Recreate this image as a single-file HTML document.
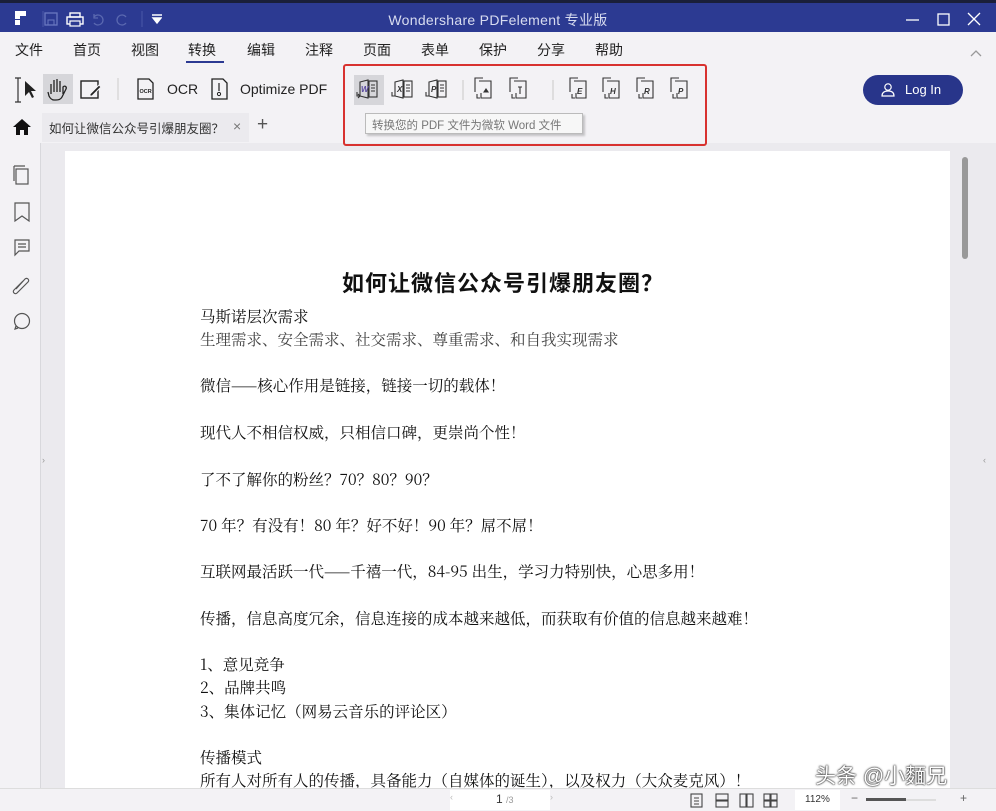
<!DOCTYPE html>
<html><head><meta charset="utf-8"><style>
*{margin:0;padding:0;box-sizing:border-box}
body{width:996px;height:811px;overflow:hidden;background:#f3f2f5;font-family:"Liberation Sans","Noto Sans CJK SC",sans-serif;position:relative;color:#222}
.abs{position:absolute}
#title{left:0;top:0;width:996px;height:32px;background:#2c3a92;border-top:3px solid #1a1f3a}
#title .t{left:0;width:996px;top:7px;text-align:center;color:#d8dcf0;font-size:14px;letter-spacing:.3px}
#menu{top:32px;left:0;width:996px;height:30px;background:#f3f2f5}
#menu span{position:absolute;top:8px;font-size:14px;color:#222}
#side{left:0;top:143px;width:41px;height:645px;border-right:1px solid #d8d8dc;background:#f3f2f5}
#gray{left:41px;top:143px;width:955px;height:645px;background:#ebeaee}
#page{left:65px;top:151px;width:885px;height:640px;background:#fff}
.p{position:absolute;left:135px;font-family:"Noto Serif CJK SC","Liberation Serif",serif;font-size:15.5px;letter-spacing:0;color:#111;white-space:nowrap;line-height:20px}
#status{left:0;top:788px;width:996px;height:23px;background:#f3f2f5;border-top:1px solid #ddd}
</style></head><body>
<div id="title" class="abs">
 <svg class="abs" style="left:12px;top:6px" width="150" height="20">
  <path d="M3 2h11v5H8v3H3z M3 11h5v5H3z" fill="#fff"/>
  <line x1="31" y1="2" x2="31" y2="18" stroke="#4a58a8"/>
  <rect x="33" y="4" width="12" height="12" fill="none" stroke="#6a78c0" stroke-width="1.3"/>
  <rect x="36" y="11" width="6" height="5" fill="none" stroke="#6a78c0"/>
  <rect x="55" y="8" width="16" height="7" fill="none" stroke="#fff" stroke-width="1.4"/><rect x="58" y="4" width="10" height="4" fill="none" stroke="#fff" stroke-width="1.4"/><rect x="58" y="12" width="10" height="5" fill="#2c3a92" stroke="#fff" stroke-width="1.2"/>
  <path d="M82 8a5 5 0 1 1 0 6M82 5v4h4" stroke="#5a68b0" fill="none" stroke-width="1.3"/>
  <path d="M114 8a5 5 0 1 0 0 6" stroke="#5a68b0" fill="none" stroke-width="1.3"/>
  <line x1="130" y1="2" x2="130" y2="18" stroke="#4a58a8"/>
  <path d="M140 6h10M141 9h8l-4 5z" stroke="#fff" fill="#fff" stroke-width="1.4"/>
 </svg>
 <div class="abs t">Wondershare PDFelement 专业版</div>
 <svg class="abs" style="left:900px;top:6px" width="90" height="20">
  <line x1="6" y1="11" x2="19" y2="11" stroke="#fff" stroke-width="1.3"/>
  <rect x="38" y="5" width="11" height="11" fill="none" stroke="#fff" stroke-width="1.3"/>
  <path d="M68 4l12 12M80 4L68 16" stroke="#fff" stroke-width="1.3"/>
 </svg>
</div>
<div id="menu" class="abs">
 <span style="left:15px">文件</span><span style="left:73px">首页</span><span style="left:131px">视图</span>
 <span style="left:188px">转换</span><span style="left:247px">编辑</span><span style="left:305px">注释</span>
 <span style="left:363px">页面</span><span style="left:421px">表单</span><span style="left:479px">保护</span>
 <span style="left:537px">分享</span><span style="left:595px">帮助</span>
 <div class="abs" style="left:186px;top:29px;width:38px;height:2px;background:#2c3a92"></div>
 <svg class="abs" style="left:969px;top:17px" width="14" height="10"><path d="M2 7l5-5 5 5" stroke="#999" fill="none" stroke-width="1.3"/></svg>
</div>
<svg class="abs" style="left:10px;top:72px" width="330" height="36">
 <path d="M8 6v24M5 6h6M5 30h6" stroke="#333" stroke-width="1.2"/>
 <path d="M15 9l0 15 4-4 3 6 2-1-3-6h5z" fill="#222"/>
 <rect x="33" y="2" width="30" height="30" fill="#d6d6da"/>
 <path d="M41 22v-10M44 20V8M47 20V7M50 20V9M53 22v-7c2-2 4 0 3 2l-4 8c-1 2-3 3-6 3h-2c-2 0-4-2-5-4l-1-4" stroke="#222" fill="none" stroke-width="1.3"/>
 <rect x="71" y="9" width="17" height="17" fill="none" stroke="#222" stroke-width="1.4"/>
 <path d="M80 22l9-9 2 2-9 9h-2z" fill="#222" stroke="#f3f2f5" stroke-width="1"/>
 <line x1="108" y1="6" x2="108" y2="28" stroke="#ccc"/>
 <path d="M128 7h11l4 4v16h-15z" fill="none" stroke="#222" stroke-width="1.3"/>
 <text x="129.5" y="21" font-size="5.5" font-weight="bold" font-family="Liberation Sans" fill="#222">OCR</text>
 <path d="M202 7h11l4 4v16h-15z" fill="none" stroke="#222" stroke-width="1.3"/>
 <path d="M209 11v8" stroke="#222" stroke-width="1.2"/><circle cx="209" cy="22" r="1.6" fill="none" stroke="#222"/>
</svg>
<div class="abs" style="left:167px;top:81px;font-size:14px;color:#222">OCR</div>
<div class="abs" style="left:240px;top:81px;font-size:14px;color:#222">Optimize PDF</div>
<div class="abs" style="left:354px;top:75px;width:30px;height:30px;background:#d6d6da"></div>
<svg class="abs" style="left:350px;top:72px" width="350" height="36">
 <g stroke="#333" fill="none" stroke-width="1.1">
  <path d="M10 10l8-2v18l-8-2z"/><rect x="19" y="9" width="8" height="16"/><path d="M21 13h4M21 16h4M21 19h4"/><path d="M7 20v4h3M8 22l2 2-2 2"/>
  <path d="M45 10l8-2v18l-8-2z"/><rect x="54" y="9" width="8" height="16"/><path d="M56 13h4M56 16h4M56 19h4"/><path d="M42 20v4h3"/>
  <path d="M79 10l8-2v18l-8-2z"/><rect x="88" y="9" width="8" height="16"/><path d="M90 13h4M90 16h4M90 19h4"/><path d="M76 20v4h3"/>
  <line x1="113" y1="8" x2="113" y2="28" stroke="#ccc"/>
  <path d="M133 6h-8v14M129 9h12v17h-10v-5"/><path d="M127 22v4h3"/><path d="M134 20l2-3 2 3z" fill="#333"/>
  <path d="M168 6h-8v14M164 9h12v17h-10v-5"/><path d="M162 22v4h3"/><path d="M168 15h4M170 15v7"/>
  <line x1="203" y1="8" x2="203" y2="28" stroke="#ccc"/>
  <path d="M228 6h-8v14M224 9h12v17h-10v-5"/><path d="M222 22v4h3"/>
  <path d="M261 6h-8v14M257 9h12v17h-10v-5"/><path d="M255 22v4h3"/>
  <path d="M295 6h-8v14M291 9h12v17h-10v-5"/><path d="M289 22v4h3"/>
  <path d="M329 6h-8v14M325 9h12v17h-10v-5"/><path d="M323 22v4h3"/>
 </g>
 <g font-family="Liberation Sans" font-style="italic" font-weight="bold" font-size="8" fill="#5a4aa0">
  <text x="11" y="20">W</text></g>
 <g font-family="Liberation Sans" font-style="italic" font-weight="bold" font-size="8" fill="#333">
  <text x="47" y="20">X</text><text x="81" y="20">P</text>
  <text x="227" y="22">E</text><text x="260" y="22">H</text><text x="294" y="22">R</text><text x="328" y="22">P</text>
 </g>
</svg>
<div class="abs" style="left:365px;top:113px;width:218px;height:21px;background:#f7f7f7;border:1px solid #bbb;box-shadow:2px 2px 2px rgba(0,0,0,.2);font-size:11.5px;color:#777;padding:3px 0 0 6px;white-space:nowrap">转换您的 PDF 文件为微软 Word 文件</div>
<div class="abs" style="left:863px;top:75px;width:100px;height:30px;background:#28358a;border-radius:15px;color:#fff;font-size:13px;line-height:30px;padding-left:42px">Log In</div>
<svg class="abs" style="left:880px;top:82px" width="16" height="16"><circle cx="8" cy="5" r="3.2" stroke="#fff" fill="none" stroke-width="1.2"/><path d="M2 14h12c0-4-3-5-6-5s-6 1-6 5z" stroke="#fff" fill="none" stroke-width="1.2"/></svg>
<svg class="abs" style="left:12px;top:118px" width="20" height="18"><path d="M1 9l9-8 9 8h-3v8h-4v-5H8v5H4V9z" fill="#111"/></svg>
<div class="abs" style="left:42px;top:113px;width:207px;height:29px;background:#ebeaee"></div>
<div class="abs" style="left:49px;top:120px;font-size:12.5px;color:#333;font-family:'Noto Sans CJK SC',sans-serif;line-height:16px">如何让微信公众号引爆朋友圈？</div>
<div class="abs" style="left:233px;top:118px;font-size:14px;color:#777">×</div>
<div class="abs" style="left:257px;top:114px;font-size:19px;color:#555;font-weight:300">+</div>
<div id="gray" class="abs"></div>
<div id="side" class="abs">
 <svg width="40" height="200" style="position:absolute;left:0;top:18px">
  <g stroke="#555" fill="none" stroke-width="1.2">
   <path d="M14 5v15M14 5h11"/><rect x="16" y="8" width="12" height="15"/>
   <path d="M15 42h14v18l-7-5-7 5z"/>
   <path d="M15 79h14v11H19l-4 4z"/><path d="M18 83h8M18 86h8"/>
   <path d="M16 128l9-10c2-2 5 1 3 3l-11 11c-2 2-5-1-3-3l9-9"/>
   <circle cx="22" cy="160" r="7.5"/><path d="M16 165l-1 3 3-1"/>
  </g>
 </svg>
</div>
<div class="abs" style="left:343px;top:64px;width:364px;height:82px;border:2px solid #d8322f;border-radius:3px"></div>
<div class="abs" style="left:42px;top:455px;font-size:9px;color:#999">›</div>
<div class="abs" style="left:983px;top:455px;font-size:9px;color:#999">‹</div>
<div id="page" class="abs">
 <div class="abs" style="left:277px;top:116px;font-family:'Noto Sans CJK SC',sans-serif;font-weight:bold;font-size:22px;letter-spacing:1px;color:#111;white-space:nowrap;line-height:30px">如何让微信公众号引爆朋友圈？</div>
 <div class="p" style="top:155px">马斯诺层次需求</div>
 <div class="p" style="top:178px;color:#444">生理需求、安全需求、社交需求、尊重需求、和自我实现需求</div>
 <div class="p" style="top:224px">微信——核心作用是链接，链接一切的载体！</div>
 <div class="p" style="top:271px">现代人不相信权威，只相信口碑，更崇尚个性！</div>
 <div class="p" style="top:318px">了不了解你的粉丝？70？80？90？</div>
 <div class="p" style="top:364px">70 年？有没有！80 年？好不好！90 年？屌不屌！</div>
 <div class="p" style="top:410px">互联网最活跃一代——千禧一代，84-95 出生，学习力特别快，心思多用！</div>
 <div class="p" style="top:457px">传播，信息高度冗余，信息连接的成本越来越低，而获取有价值的信息越来越难！</div>
 <div class="p" style="top:503px">1、意见竞争</div>
 <div class="p" style="top:526px">2、品牌共鸣</div>
 <div class="p" style="top:550px">3、集体记忆（网易云音乐的评论区）</div>
 <div class="p" style="top:596px">传播模式</div>
 <div class="p" style="top:619px">所有人对所有人的传播，具备能力（自媒体的诞生），以及权力（大众麦克风）！</div>
</div>
<div class="abs" style="left:962px;top:157px;width:6px;height:102px;background:#999;border-radius:3px"></div>
<div id="status" class="abs">
 <div class="abs" style="left:450px;top:1px;width:100px;height:20px;background:#fff"></div>
 <div class="abs" style="left:496px;top:3px;font-size:12px;color:#333">1 <span style="font-size:9px;color:#999">/3</span></div>
 <div class="abs" style="left:450px;top:3px;font-size:9px;color:#bbb">‹</div>
 <div class="abs" style="left:550px;top:3px;font-size:9px;color:#bbb">›</div>
 <svg class="abs" style="left:688px;top:3px" width="95" height="17"><g stroke="#444" fill="none" stroke-width="1.1">
  <rect x="3" y="2" width="11" height="13"/><path d="M6 6h5M6 9h5M6 12h5"/>
  <rect x="28" y="2" width="12" height="6"/><rect x="28" y="9" width="12" height="6"/>
  <rect x="52" y="2" width="6" height="13"/><rect x="59" y="2" width="6" height="13"/>
  <rect x="76" y="2" width="6" height="6"/><rect x="83" y="2" width="6" height="6"/><rect x="76" y="9" width="6" height="6"/><rect x="83" y="9" width="6" height="6"/>
 </g></svg>
 <div class="abs" style="left:795px;top:1px;width:45px;height:20px;background:#fff;font-size:10px;color:#333;padding:4px 0 0 10px">112%</div>
 <div class="abs" style="left:851px;top:2px;font-size:12px;color:#666">−</div>
 <div class="abs" style="left:866px;top:10px;width:70px;height:2px;background:#ddd"></div>
 <div class="abs" style="left:866px;top:9px;width:40px;height:3px;background:#555"></div>
 <div class="abs" style="left:960px;top:2px;font-size:12px;color:#666">+</div>
</div>
<div class="abs" style="left:815px;top:760px;font-size:21px;color:#fff;text-shadow:0 0 2px #000,0 0 1px #000;white-space:nowrap">头条 @小麵兄</div>
</body></html>
